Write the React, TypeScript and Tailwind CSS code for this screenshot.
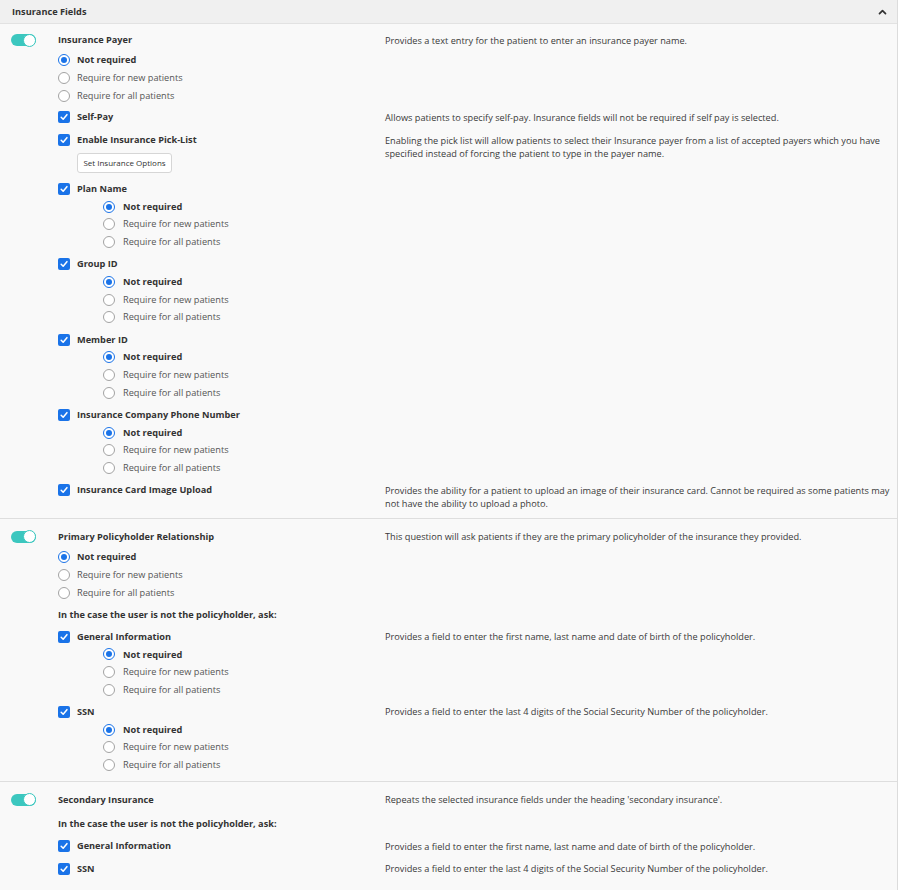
import React from 'react';

const OPTIONS = ['Not required', 'Require for new patients', 'Require for all patients'];

function Toggle() {
  return (
    <div className="relative h-[12px] w-[25px] rounded-full bg-[#3cc7bf]">
      <div className="absolute right-0 top-[-0.5px] h-[13px] w-[13px] rounded-full border border-[#3cc7bf] bg-white" />
    </div>
  );
}

function Check() {
  return (
    <span className="flex h-[12px] w-[12px] shrink-0 items-center justify-center rounded-[2px] bg-[#1a73e8]">
      <svg viewBox="0 0 12 12" className="h-[10px] w-[10px]">
        <path d="M2.6 6.3 L5 8.7 L9.5 3.2" fill="none" stroke="white" strokeWidth="1.8" strokeLinecap="round" strokeLinejoin="round" />
      </svg>
    </span>
  );
}

function Radio({ on }: { on: boolean }) {
  return on ? (
    <span className="flex h-[12px] w-[12px] shrink-0 items-center justify-center rounded-full border-[1.5px] border-[#1a73e8] bg-white">
      <span className="h-[6px] w-[6px] rounded-full bg-[#1a73e8]" />
    </span>
  ) : (
    <span className="h-[12px] w-[12px] shrink-0 rounded-full border border-[#a3a3a3] bg-white" />
  );
}

function RadioGroup({ nested }: { nested?: boolean }) {
  return (
    <div className={nested ? 'pl-[45px]' : 'mt-[2px]'}>
      {OPTIONS.map((o, i) => (
        <div key={o} className={nested ? 'flex h-[17.6px] items-center gap-[8px]' : 'flex h-[18px] items-center gap-[7px]'}>
          <Radio on={i === 0} />
          <span className={i === 0 ? 'font-bold text-[#333]' : 'text-[#555]'}>{o}</span>
        </div>
      ))}
    </div>
  );
}

function Row({ children, desc, className = '' }: { children: React.ReactNode; desc?: string; className?: string }) {
  return (
    <div className={`flex items-start ${className}`}>
      <div className="w-[327px] shrink-0">{children}</div>
      {desc && <p className="w-[508px] pt-[2.5px] leading-[13px] text-[#3a3a3a]">{desc}</p>}
    </div>
  );
}

function CheckLabel({ label }: { label: string }) {
  return (
    <div className="flex h-[18px] items-center gap-[7px]">
      <Check />
      <span className="font-bold text-[#333]">{label}</span>
    </div>
  );
}

function Title({ label }: { label: string }) {
  return <div className="flex h-[18px] items-center font-bold text-[#333]">{label}</div>;
}

function Section({ children, className = '' }: { children: React.ReactNode; className?: string }) {
  return (
    <div className={`flex border-b border-[#dedede] ${className}`}>
      <div className="flex h-[18px] w-[58px] shrink-0 items-center pl-[11px]">
        <Toggle />
      </div>
      <div className="flex-1">{children}</div>
    </div>
  );
}

const GENERAL = 'Provides a field to enter the first name, last name and date of birth of the policyholder.';
const SSN = 'Provides a field to enter the last 4 digits of the Social Security Number of the policyholder.';

export default function App() {
  return (
    <div className="min-h-[890px] w-[902px] bg-white font-['Open_Sans',sans-serif] text-[9.2px]">
      <div className="min-h-[890px] w-[898px] border-r border-[#dcdcdc] bg-[#f9f9f9]">
        <div className="flex h-[24px] items-center justify-between border-b border-[#e2e2e2] bg-[#f0f0f0] pl-[12px] pr-[10px]">
          <span className="font-bold text-[#333]">Insurance Fields</span>
          <svg viewBox="0 0 10 7" className="h-[6px] w-[9px]">
            <path d="M1.5 5.5 L5 2 L8.5 5.5" fill="none" stroke="#333" strokeWidth="2" strokeLinecap="round" strokeLinejoin="round" />
          </svg>
        </div>

        <Section className="pb-[8px] pt-[7px]">
          <Row desc="Provides a text entry for the patient to enter an insurance payer name.">
            <Title label="Insurance Payer" />
          </Row>
          <RadioGroup />
          <Row className="mt-[3px]" desc="Allows patients to specify self-pay. Insurance fields will not be required if self pay is selected.">
            <CheckLabel label="Self-Pay" />
          </Row>
          <Row
            className="mt-[5px]"
            desc="Enabling the pick list will allow patients to select their Insurance payer from a list of accepted payers which you have specified instead of forcing the patient to type in the payer name."
          >
            <CheckLabel label="Enable Insurance Pick-List" />
            <div className="ml-[19px] mt-[4px] flex h-[20px] w-[95px] items-center justify-center rounded-[3px] border border-[#d6d6d6] bg-white text-[8px] text-[#333]">
              Set Insurance Options
            </div>
          </Row>
          <div className="mt-[7px]">
            <CheckLabel label="Plan Name" />
            <RadioGroup nested />
          </div>
          <div className="mt-[4.5px]">
            <CheckLabel label="Group ID" />
            <RadioGroup nested />
          </div>
          <div className="mt-[4.5px]">
            <CheckLabel label="Member ID" />
            <RadioGroup nested />
          </div>
          <div className="mt-[4.5px]">
            <CheckLabel label="Insurance Company Phone Number" />
            <RadioGroup nested />
          </div>
          <Row
            className="mt-[4.5px]"
            desc="Provides the ability for a patient to upload an image of their insurance card. Cannot be required as some patients may not have the ability to upload a photo."
          >
            <CheckLabel label="Insurance Card Image Upload" />
          </Row>
        </Section>

        <Section className="pb-[7px] pt-[9px]">
          <Row desc="This question will ask patients if they are the primary policyholder of the insurance they provided.">
            <Title label="Primary Policyholder Relationship" />
          </Row>
          <RadioGroup />
          <div className="mt-[4px]">
            <Title label="In the case the user is not the policyholder, ask:" />
          </div>
          <Row className="mt-[4px]" desc={GENERAL}>
            <CheckLabel label="General Information" />
          </Row>
          <RadioGroup nested />
          <Row className="mt-[4.5px]" desc={SSN}>
            <CheckLabel label="SSN" />
          </Row>
          <RadioGroup nested />
        </Section>

        <div className="flex pt-[9px]">
          <div className="flex h-[18px] w-[58px] shrink-0 items-center pl-[11px]">
            <Toggle />
          </div>
          <div className="flex-1">
            <Row desc="Repeats the selected insurance fields under the heading 'secondary insurance'.">
              <Title label="Secondary Insurance" />
            </Row>
            <div className="mt-[6px]">
              <Title label="In the case the user is not the policyholder, ask:" />
            </div>
            <Row className="mt-[4.5px]" desc={GENERAL}>
              <CheckLabel label="General Information" />
            </Row>
            <Row className="mt-[4.5px]" desc={SSN}>
              <CheckLabel label="SSN" />
            </Row>
          </div>
        </div>
      </div>
    </div>
  );
}
